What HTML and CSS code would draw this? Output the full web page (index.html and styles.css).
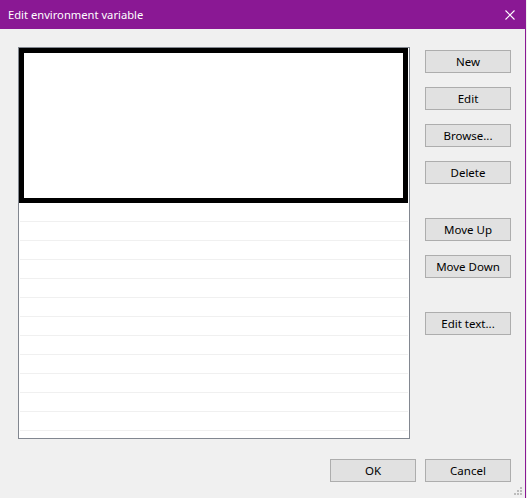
FILE: index.html
```html
<!DOCTYPE html>
<html>
<head>
<meta charset="utf-8">
<link rel="stylesheet" href="styles.css">
</head>
<body>
<div class="window">
  <div class="titlebar">
    <span class="title">Edit environment variable</span>
    <svg class="close" width="10" height="10" viewBox="0 0 10 10"><path d="M0.5 0.5 L9.5 9.5 M9.5 0.5 L0.5 9.5" stroke="#fff" stroke-width="1.1" fill="none"/></svg>
  </div>
  <div class="content">
    <div class="list">
      <div class="row"></div><div class="row"></div><div class="row"></div><div class="row"></div>
      <div class="row"></div><div class="row"></div><div class="row"></div><div class="row"></div>
      <div class="row"></div><div class="row"></div><div class="row"></div><div class="row"></div>
      <div class="row"></div><div class="row"></div><div class="row"></div><div class="row"></div>
      <div class="row"></div><div class="row"></div><div class="row"></div><div class="row"></div>
      <div class="row"></div>
      <div class="editbox"></div>
    </div>
    <div class="side">
      <button class="btn">New</button>
      <button class="btn">Edit</button>
      <button class="btn">Browse...</button>
      <button class="btn">Delete</button>
      <button class="btn group">Move Up</button>
      <button class="btn">Move Down</button>
      <button class="btn group">Edit text...</button>
    </div>
  </div>
  <div class="footer">
    <button class="btn">OK</button>
    <button class="btn">Cancel</button>
  </div>
  <svg class="grip" width="9" height="9" viewBox="0 0 9 9">
    <rect x="6" y="0" width="2" height="2" fill="#bcbcbc"/>
    <rect x="3" y="3" width="2" height="2" fill="#bcbcbc"/>
    <rect x="6" y="3" width="2" height="2" fill="#bcbcbc"/>
    <rect x="0" y="6" width="2" height="2" fill="#bcbcbc"/>
    <rect x="3" y="6" width="2" height="2" fill="#bcbcbc"/>
    <rect x="6" y="6" width="2" height="2" fill="#bcbcbc"/>
  </svg>
</div>
</body>
</html>
```
FILE: styles.css
```css
html, body {
  margin: 0;
  padding: 0;
  background: #f0f0f0;
}
body {
  width: 527px;
  height: 498px;
  overflow: hidden;
  font-family: "Noto Sans", "Open Sans", sans-serif;
  font-size: 11.5px;
  color: #000;
}
.window {
  position: relative;
  width: 526px;
  height: 498px;
  box-sizing: border-box;
  border-right: 1px solid #8a1894;
  background: #f0f0f0;
  display: flex;
  flex-direction: column;
}
.titlebar {
  height: 29px;
  flex: none;
  background: #8a1894;
  color: #fff;
  display: flex;
  align-items: center;
  padding-left: 8px;
  padding-right: 10px;
  position: relative;
}
.title {
  font-size: 11.2px;
  line-height: 1;
  margin-top: 1px;
}
.close {
  margin-left: auto;
}
.content {
  display: flex;
  padding: 18px 14px 0 18px;
  gap: 15px;
}
.list {
  position: relative;
  width: 392px;
  height: 392px;
  box-sizing: border-box;
  border: 1px solid #828790;
  background: #fff;
  padding: 3px 1px 0 1px;
  overflow: hidden;
}
.row {
  height: 19px;
  box-sizing: border-box;
  border-bottom: 1px solid #f0f0f0;
}
.editbox {
  position: absolute;
  left: 0;
  top: 0;
  width: 389px;
  height: 155px;
  box-sizing: border-box;
  border: 5px solid #000;
  background: #fff;
}
.side {
  display: flex;
  flex-direction: column;
  padding-top: 3px;
  gap: 14px;
}
.btn {
  width: 86px;
  height: 23px;
  box-sizing: border-box;
  border: 1px solid #adadad;
  background: #e1e1e1;
  font-family: "Noto Sans", "Open Sans", sans-serif;
  font-size: 11.5px;
  color: #000;
  padding: 1px 0 0 0;
  margin: 0;
  line-height: 20px;
  border-radius: 0;
}
.side .group {
  margin-top: 20px;
}
.footer {
  display: flex;
  justify-content: flex-end;
  gap: 9px;
  padding: 20px 14px 0 0;
}
.grip {
  position: absolute;
  right: 2px;
  bottom: 2px;
}
```
